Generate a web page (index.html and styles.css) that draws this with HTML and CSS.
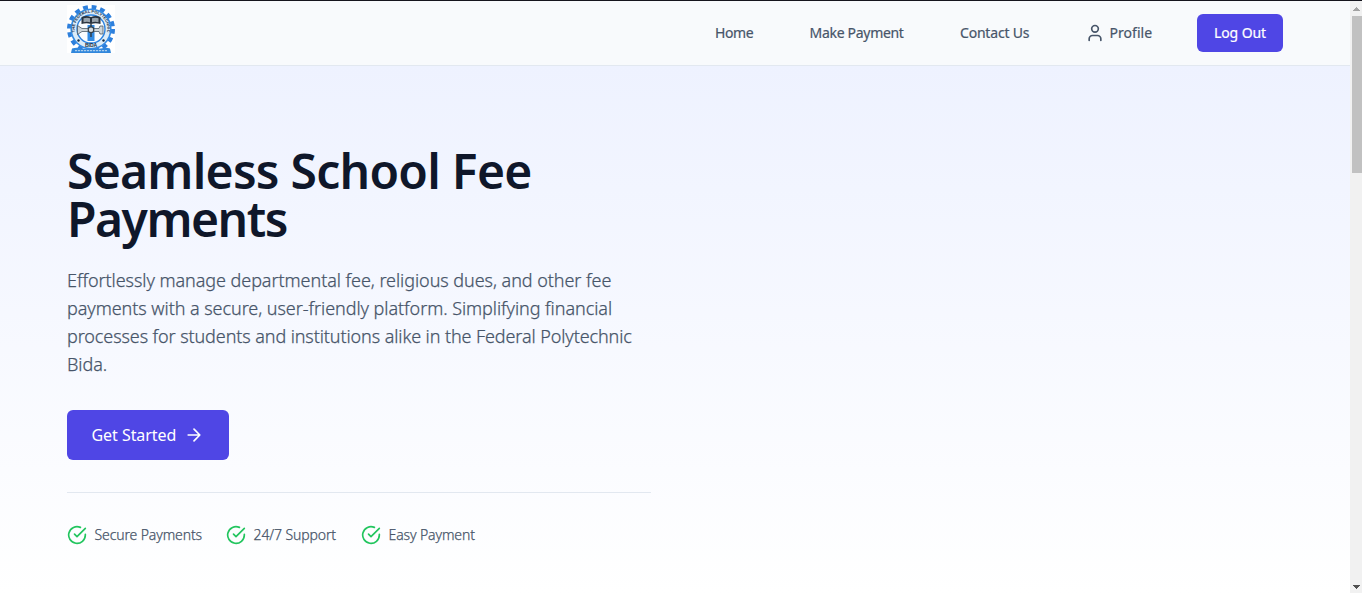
FILE: index.html
```html
<!DOCTYPE html>
<html lang="en">
<head>
<meta charset="utf-8">
<title>School Fee Payments</title>
<link rel="stylesheet" href="styles.css">
</head>
<body>
<div class="page">
  <header class="header">
    <a class="brand" href="#">
      <svg class="logo" viewBox="0 0 48 48" role="img" aria-label="The Federal Polytechnic Bida">
        <rect width="48" height="48" fill="#fff"/>
        <circle cx="24" cy="24" r="22" fill="none" stroke="#2d7fdc" stroke-width="4" stroke-dasharray="4.8 3.84"/>
        <circle cx="24" cy="24" r="20.6" fill="#348be4"/>
        <circle cx="24" cy="24" r="19" fill="#dcecf8"/>
        <circle cx="24" cy="24" r="14" fill="#f8fcff" stroke="#2d83df" stroke-width="1.4"/>
        <path d="M20.5 20h7v16h-7z" fill="#318be3"/>
        <path d="M14.5 12q5-2 9.5 0 4.5-2 9.5 0v7q-5-1.5-9.5 0-4.5-1.5-9.5 0z" fill="#29333e"/>
        <path d="M16.5 13.3q3.5-1 6.5 0v4q-3-1-6.5 0zM25 13.3q3.5-1 6.5 0v4q-3.5-1-6.5 0z" fill="#98a3ac"/>
        <path d="M10.5 20.5l4.5 3h17l1-2.5h3v8h-3l-1-2.5H15l-4.5 3z" fill="#cdd5d9" stroke="#4c5c68" stroke-width=".8"/>
        <path d="M24 19v13" stroke="#2f3d49" stroke-width="1.5"/>
        <circle cx="24" cy="24.7" r="2.8" fill="#d7dcdf" stroke="#34404a" stroke-width="1.2"/>
        <circle cx="11.5" cy="35.5" r="1.2" fill="#122b44"/><circle cx="36.5" cy="35.5" r="1.2" fill="#122b44"/>
        <path id="seal-arc" d="M9.8 32A16.3 16.3 0 1 1 38.2 32" fill="none"/>
        <text class="seal-text" font-size="4"><textPath href="#seal-arc" startOffset="50%" text-anchor="middle">THE FEDERAL POLYTECHNIC</textPath></text>
        <text class="seal-text" x="24" y="42" font-size="5" text-anchor="middle">BIDA</text>
        <path d="M5 43.5q5-1.5 9 0 10 .8 20 0 5-1.5 9 0l1 4.5H4z" fill="#3187dc"/>
        <path d="M8 45.7h32" stroke="#c5dff2" stroke-width="1" stroke-dasharray="2.2 .8"/>
      </svg>
    </a>
    <nav class="nav">
      <a class="nav-link home" href="#">Home</a>
      <a class="nav-link make" href="#">Make Payment</a>
      <a class="nav-link contact" href="#">Contact Us</a>
      <a class="nav-link profile" href="#"><svg class="icon user-icon" viewBox="0 0 24 24"><path d="M19 21v-2a4 4 0 0 0-4-4H9a4 4 0 0 0-4 4v2"/><circle cx="12" cy="7" r="4"/></svg><span>Profile</span></a>
      <a class="logout" href="#">Log Out</a>
    </nav>
  </header>
  <main class="hero">
    <div class="hero-copy">
      <h1 class="title"><span class="t1">Seamless School Fee</span><span class="t2">Payments</span></h1>
      <p class="lead"><span class="l1">Effortlessly manage departmental fee, religious dues, and other fee</span> <span class="l2">payments with a secure, user-friendly platform. Simplifying financial</span> <span class="l3">processes for students and institutions alike in the Federal Polytechnic</span> <span class="l4">Bida.</span></p>
      <a class="cta" href="#"><span>Get Started</span><svg class="icon arrow-icon" viewBox="0 0 24 24"><path d="M5 12h14M12 5l7 7-7 7"/></svg></a>
      <ul class="features">
        <li class="feature f1"><svg class="icon check-icon" viewBox="0 0 24 24"><path d="M22 11.08V12a10 10 0 1 1-5.93-9.14"/><path d="m9 11 3 3L22 4"/></svg><span>Secure Payments</span></li>
        <li class="feature f2"><svg class="icon check-icon" viewBox="0 0 24 24"><path d="M22 11.08V12a10 10 0 1 1-5.93-9.14"/><path d="m9 11 3 3L22 4"/></svg><span>24/7 Support</span></li>
        <li class="feature f3"><svg class="icon check-icon" viewBox="0 0 24 24"><path d="M22 11.08V12a10 10 0 1 1-5.93-9.14"/><path d="m9 11 3 3L22 4"/></svg><span>Easy Payment</span></li>
      </ul>
    </div>
  </main>
</div>
<div class="scrollbar" aria-hidden="true">
  <svg class="scroll-arrow" viewBox="0 0 12 15"><path d="M6 6h1v1h1v1h1v1h1v1H3V9h1V8h1V7h1z" fill="#a3a3a3"/></svg>
  <div class="thumb"></div>
  <svg class="scroll-arrow down" viewBox="0 0 12 15"><path d="M3 7h7v1H9v1H8v1H7v1H6v-1H5V9H4V8H3z" fill="#505050"/></svg>
</div>
</body>
</html>
```
FILE: styles.css
```css
* { box-sizing: border-box; }
body {
  margin: 0;
  height: 593px;
  display: flex;
  overflow: hidden;
  border-top: 1px solid #15151d;
  font-family: "Noto Sans", "Open Sans", sans-serif;
  color: #475569;
  background: #fff;
}
a { color: inherit; text-decoration: none; }
.page { width: 1350px; height: 592px; }
.icon { fill: none; stroke: currentColor; stroke-width: 2; stroke-linecap: round; stroke-linejoin: round; flex: none; }
.header {
  height: 65px;
  padding: 0 67px;
  display: flex;
  justify-content: space-between;
  background: #f8fafc;
  border-bottom: 1px solid #e2e8f0;
}
.brand { padding-top: 4px; }
.logo { display: block; width: 48px; height: 48px; }
.seal-text { font-family: "Liberation Sans", sans-serif; font-weight: 700; fill: #122b44; }
.nav { display: flex; align-items: center; height: 64px; font-size: 14px; line-height: 20px; font-weight: 400; white-space: nowrap; -webkit-text-stroke: 0.2px currentColor; }
.nav-link { display: flex; align-items: center; }
.home { width: 94.5px; letter-spacing: -0.4px; }
.make { width: 150.5px; letter-spacing: -0.3px; }
.contact { width: 126px; letter-spacing: -0.2px; }
.profile { width: 111px; gap: 4.5px; letter-spacing: 0.05px; }
.user-icon { width: 20px; height: 20px; margin-left: -1px; }
.logout { width: 86px; height: 38px; border-radius: 6px; background: #4f46e5; color: #fff; display: flex; align-items: center; justify-content: center; letter-spacing: -0.1px; }
.hero { height: 528px; padding: 80px 67px 0; background: linear-gradient(#eef2ff, #fff); }
.hero-copy { width: 584px; }
.title { margin: 0; padding-top: 1px; font-size: 48px; line-height: 48px; font-weight: 600; color: #0f172a; white-space: nowrap; }
.title span, .lead span { display: block; }
.t1 { letter-spacing: -0.73px; }
.t2 { letter-spacing: -1.5px; }
.lead { margin: 23px 0 0; font-size: 18px; line-height: 28px; font-weight: 300; white-space: nowrap; letter-spacing: -0.06px; -webkit-text-stroke: 0.25px currentColor; }
.l3 { letter-spacing: -0.1px; }
.cta { margin-top: 32px; width: 162px; height: 50px; padding-left: 24.5px; display: flex; align-items: center; gap: 8.5px; border-radius: 6px; background: #4f46e5; color: #fff; font-size: 16px; font-weight: 400; white-space: nowrap; }
.cta span { width: 86px; letter-spacing: -0.05px; }
.arrow-icon { width: 20px; height: 20px; margin-left: -2px; }
.features { list-style: none; margin: 32px 0 0; padding: 32px 0 0; border-top: 1px solid #e2e8f0; display: flex; font-size: 14px; line-height: 20px; font-weight: 300; white-space: nowrap; letter-spacing: -0.11px; }
.feature { display: flex; align-items: center; gap: 7.5px; }
.feature span { -webkit-text-stroke: 0.25px currentColor; }
.f1 { width: 159px; }
.f2 { width: 135px; }
.check-icon { width: 20px; height: 20px; color: #22c55e; }
.scrollbar { width: 12px; height: 592px; background: #f1f1f1; display: flex; flex-direction: column; align-items: flex-end; }
.scroll-arrow { width: 12px; height: 15px; flex: none; }
.thumb { width: 10px; height: 157px; background: #c1c1c1; }
.down { margin-top: auto; }
```
